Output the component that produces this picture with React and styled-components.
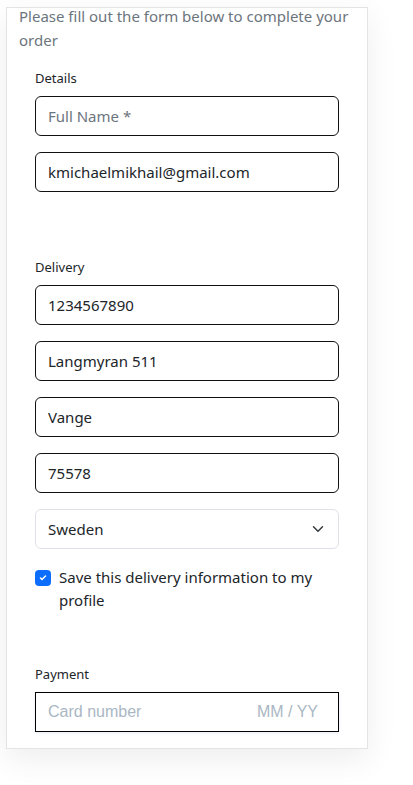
import styled, { createGlobalStyle } from 'styled-components';

// -----------------
// GLOBAL
// -----------------
const GlobalStyle = createGlobalStyle`
  html, body {
    margin: 0;
    padding: 0;
    background: #fff;
  }

  body {
    font-family: 'Noto Sans', 'Open Sans', sans-serif;
    color: #212529;
    -webkit-font-smoothing: antialiased;
  }

  * {
    box-sizing: border-box;
  }
`;

// -----------------
// STYLED COMPONENTS
// -----------------
const Page = styled.div`
  padding: 7px 0 40px 6px;
`;

const Card = styled.div`
  width: 362px;
  background: #fff;
  border: 1px solid #e4e4e4;
  box-shadow: 0 10px 30px rgba(0, 0, 0, 0.07);
  padding: 0 12px 16px;
`;

const Intro = styled.p`
  margin: -4px 0 0;
  font-size: 15px;
  line-height: 24px;
  color: #6c757d;
`;

const Form = styled.form`
  padding: 0 16px;
`;

const Section = styled.div`
  margin-top: ${({ $top }) => $top}px;
  display: flex;
  flex-direction: column;
`;

const SectionLabel = styled.label`
  font-size: 13px;
  line-height: 20px;
  color: #212529;
  margin-bottom: 8px;
`;

const Fields = styled.div`
  display: flex;
  flex-direction: column;
  gap: 16px;
`;

const Input = styled.input`
  width: 100%;
  height: 40px;
  padding: 0 12px;
  border: 1px solid #111;
  border-radius: 6px;
  font-family: inherit;
  font-size: 15px;
  color: #212529;
  background: #fff;
  outline: none;

  &::placeholder {
    color: #6c757d;
  }
`;

const SelectWrap = styled.div`
  position: relative;
  height: 40px;
`;

const Select = styled.select`
  appearance: none;
  width: 100%;
  height: 40px;
  padding: 0 36px 0 12px;
  border: 1px solid #dee2e6;
  border-radius: 6px;
  font-family: inherit;
  font-size: 15px;
  color: #212529;
  background: #fff;
  outline: none;
`;

const Chevron = styled.svg`
  position: absolute;
  right: 15px;
  top: 14px;
  pointer-events: none;
`;

const CheckRow = styled.label`
  display: flex;
  align-items: flex-start;
  gap: 8px;
  margin-top: 17px;
  font-size: 15px;
  line-height: 23px;
  color: #212529;
`;

const CheckBox = styled.span`
  flex-shrink: 0;
  width: 16px;
  height: 16px;
  margin-top: 4px;
  border-radius: 4px;
  background: #0d6efd;
  display: flex;
  align-items: center;
  justify-content: center;
`;

const CardElement = styled.div`
  height: 40px;
  border: 1px solid #000;
  padding: 0 20px 0 12px;
  display: flex;
  align-items: center;
  justify-content: space-between;
  box-shadow: 0 1px 3px 0 #e6ebf1;
  font-family: 'Liberation Sans', Arial, sans-serif;
  font-size: 16px;
  color: #aab7c4;
`;

// -----------------
// MAIN COMPONENT
// -----------------
export default function App() {
  return (
    <Page>
      <GlobalStyle />
      <Card>
        <Intro>Please fill out the form below to complete your order</Intro>
        <Form onSubmit={(e) => e.preventDefault()}>
          <Section $top={16}>
            <SectionLabel>Details</SectionLabel>
            <Fields>
              <Input placeholder="Full Name *" />
              <Input defaultValue="kmichaelmikhail@gmail.com" />
            </Fields>
          </Section>

          <Section $top={65}>
            <SectionLabel>Delivery</SectionLabel>
            <Fields>
              <Input defaultValue="1234567890" />
              <Input defaultValue="Langmyran 511" />
              <Input defaultValue="Vange" />
              <Input defaultValue="75578" />
              <SelectWrap>
                <Select defaultValue="SE">
                  <option value="SE">Sweden</option>
                </Select>
                <Chevron width="12" height="12" viewBox="0 0 16 16">
                  <path d="M2 5l6 6 6-6" fill="none" stroke="#343a40" strokeWidth="2" strokeLinecap="round" strokeLinejoin="round" />
                </Chevron>
              </SelectWrap>
            </Fields>
            <CheckRow>
              <CheckBox>
                <svg width="10" height="10" viewBox="0 0 20 20">
                  <path d="M5 10l3 3 7-7" fill="none" stroke="#fff" strokeWidth="3" strokeLinecap="round" strokeLinejoin="round" />
                </svg>
              </CheckBox>
              <span>Save this delivery information to my profile</span>
            </CheckRow>
          </Section>

          <Section $top={52}>
            <SectionLabel>Payment</SectionLabel>
            <CardElement>
              <span>Card number</span>
              <span>MM / YY</span>
            </CardElement>
          </Section>
        </Form>
      </Card>
    </Page>
  );
}
